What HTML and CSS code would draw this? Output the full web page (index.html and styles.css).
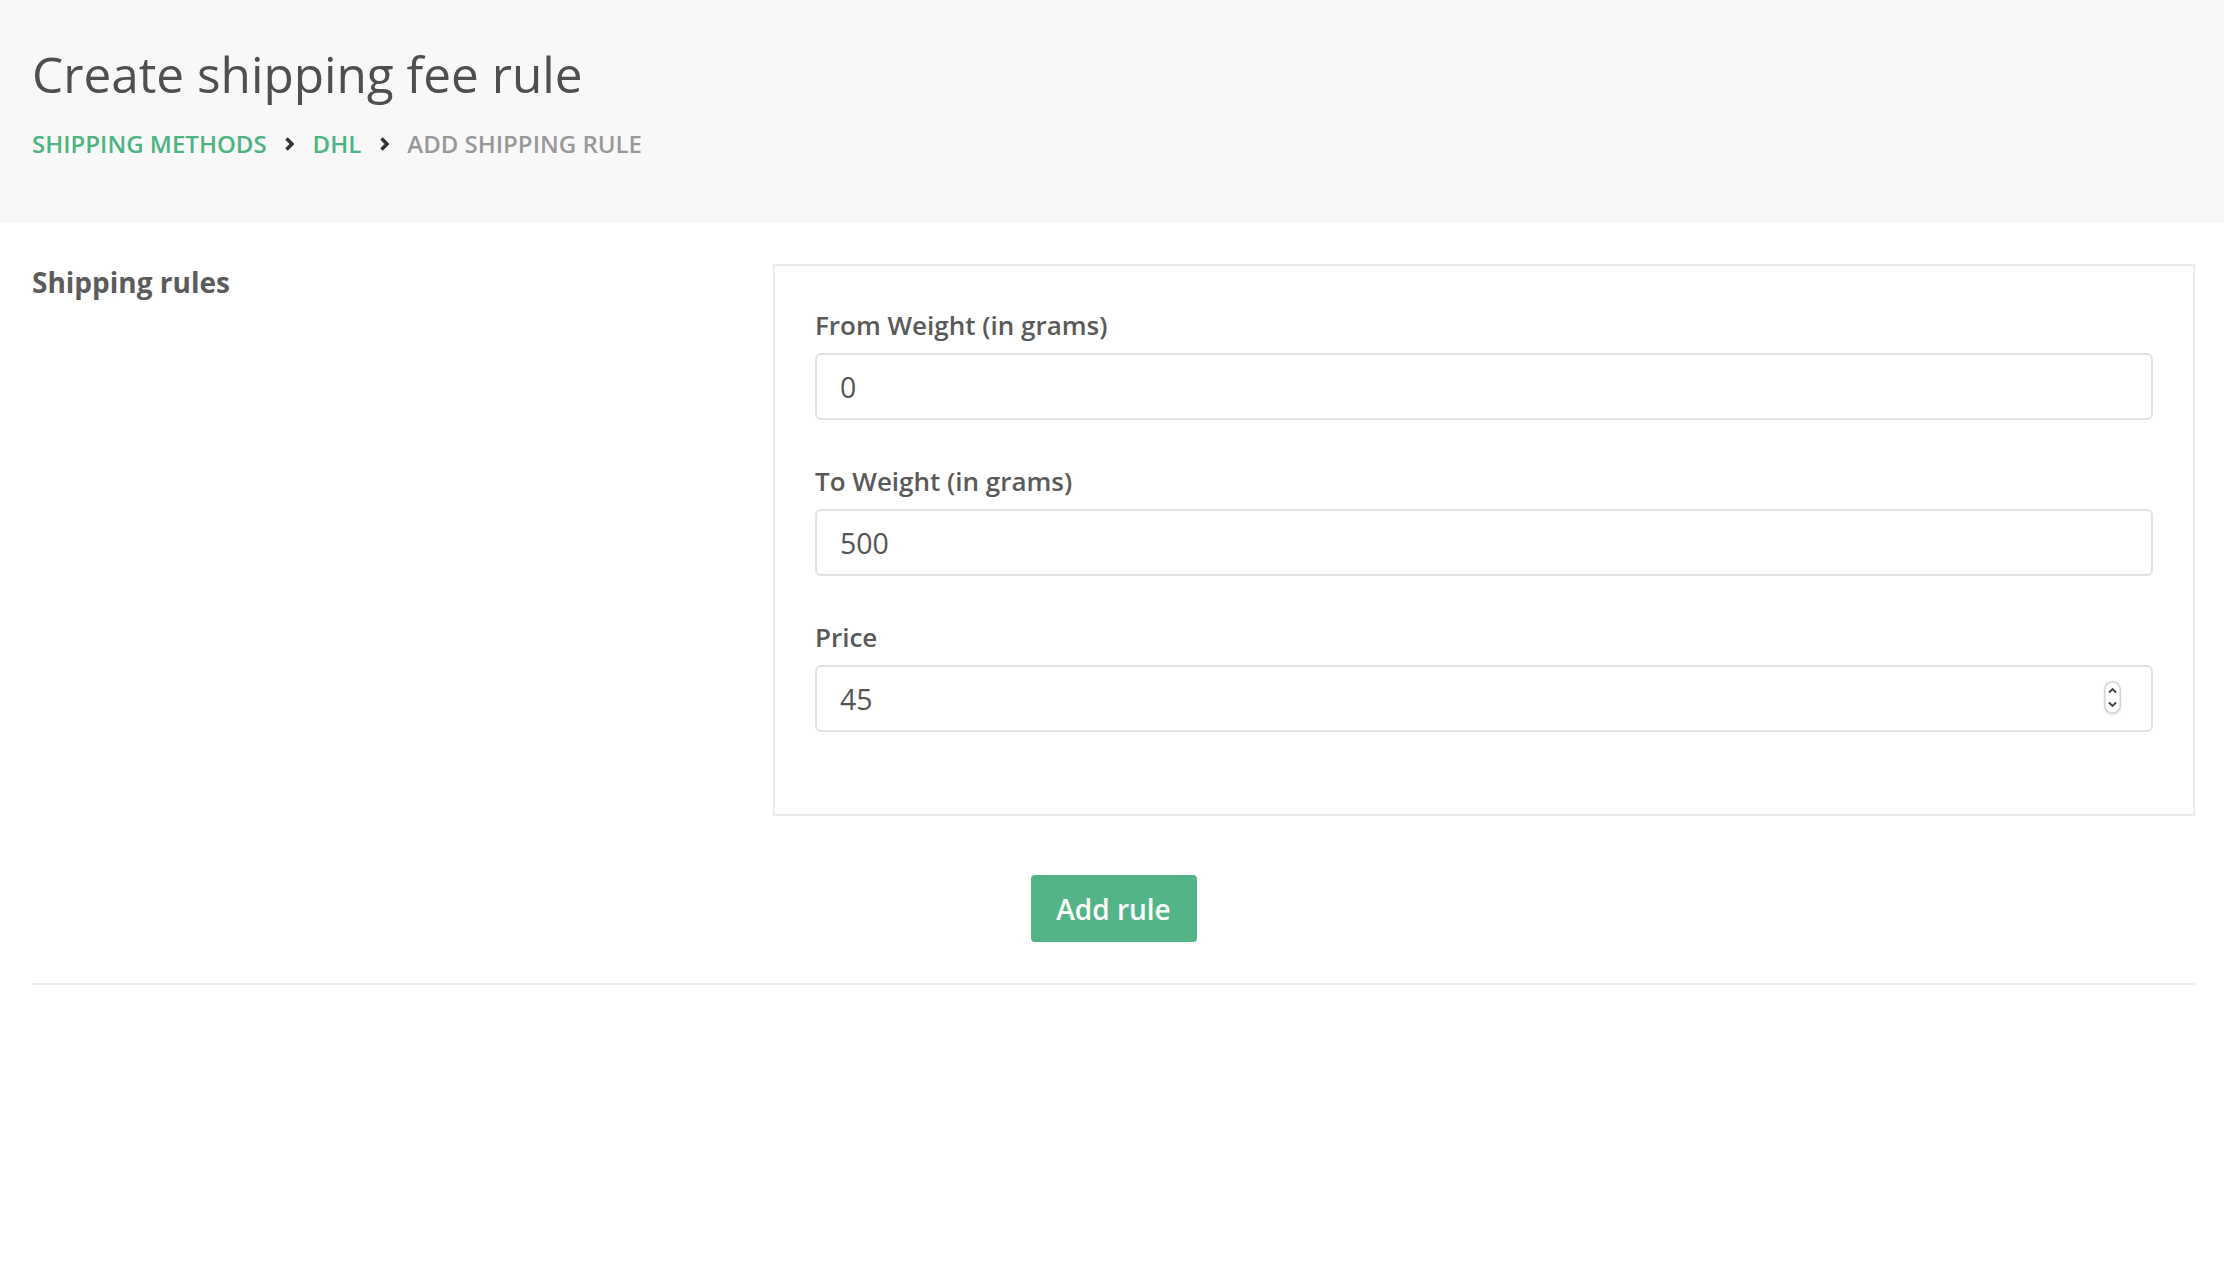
FILE: index.html
```html
<!DOCTYPE html>
<html lang="en">
<head>
  <meta charset="UTF-8">
  <meta name="viewport" content="width=device-width, initial-scale=1.0">
  <title>Create shipping fee rule</title>
  <link rel="stylesheet" href="styles.css">
</head>
<body>

  <!-- Page header with breadcrumb -->
  <header class="page-header">
    <h1 class="page-title">Create shipping fee rule</h1>
    <nav class="breadcrumb">
      <a href="#" class="crumb-link">Shipping methods</a>
      <svg class="crumb-sep" width="9" height="14" viewBox="0 0 9 14"><path d="M1.5 1.5 L7 7 L1.5 12.5" /></svg>
      <a href="#" class="crumb-link">DHL</a>
      <svg class="crumb-sep" width="9" height="14" viewBox="0 0 9 14"><path d="M1.5 1.5 L7 7 L1.5 12.5" /></svg>
      <span class="crumb-current">Add shipping rule</span>
    </nav>
  </header>

  <!-- Rule form -->
  <div class="content">
    <form id="rule-form" class="rule-form">
      <div class="form-section">
        <h3 class="section-title">Shipping rules</h3>
        <div class="form-card">
          <div class="form-group">
            <label for="from_weight">From Weight (in grams)</label>
            <input type="text" id="from_weight" name="from_weight" value="0">
          </div>
          <div class="form-group">
            <label for="to_weight">To Weight (in grams)</label>
            <input type="text" id="to_weight" name="to_weight" value="500">
          </div>
          <div class="form-group">
            <label for="price">Price</label>
            <div class="input-wrap">
              <input type="number" id="price" name="price" value="45">
              <svg class="spinner" width="17" height="33" viewBox="0 0 17 33">
                <rect x="0.75" y="0.75" width="15.5" height="31.5" rx="7.75" />
                <path d="M5 11.5 L8.5 8 L12 11.5" />
                <path d="M5 21.5 L8.5 25 L12 21.5" />
              </svg>
            </div>
          </div>
        </div>
      </div>

      <div class="form-actions">
        <button type="submit" class="submit-button">Add rule</button>
      </div>
      <hr class="divider">
    </form>
  </div>

</body>
</html>
```

FILE: styles.css
```css
/* General page styles */
body {
  margin: 0;
  font-family: "Open Sans", "Noto Sans", sans-serif;
  background-color: #fff;
  color: #555;
}

/* Header */
.page-header {
  background-color: #f8f8f8;
  height: 223px;
  box-sizing: border-box;
  padding: 44px 29px 0 32px;
}

.page-title {
  margin: 0;
  font-size: 49.5px;
  line-height: 60px;
  font-weight: 400;
  color: #4f4f4f;
}

.breadcrumb {
  display: flex;
  align-items: center;
  gap: 18.5px;
  margin-top: 25px;
  font-size: 24px;
  line-height: 30px;
  font-weight: 600;
  text-transform: uppercase;
}

.crumb-link {
  color: #4db482;
  text-decoration: none;
}

.crumb-current {
  color: #999;
}

.crumb-sep path {
  fill: none;
  stroke: #333;
  stroke-width: 3.5;
}

/* Content */
.content {
  padding: 41px 29px 0 32px;
}

.form-section {
  display: grid;
  grid-template-columns: 741px 1fr;
}

.section-title {
  margin: 0;
  font-size: 28px;
  line-height: 36px;
  font-weight: 700;
  color: #5c5c5c;
}

.form-card {
  border: 2px solid #ebebeb;
  padding: 41px 40px 39px;
}

.form-group {
  margin-bottom: 43px;
}

label {
  display: block;
  margin-bottom: 10px;
  font-size: 26px;
  line-height: 36px;
  font-weight: 600;
  color: #5a5a5a;
}

input[type="text"], input[type="number"] {
  display: block;
  width: 100%;
  height: 67px;
  box-sizing: border-box;
  padding: 0 23px;
  border: 2px solid #e3e3e3;
  border-radius: 6px;
  background-color: #fff;
  font-family: inherit;
  font-size: 28.5px;
  color: #555;
  outline: none;
  -moz-appearance: textfield;
}

input[type="number"]::-webkit-inner-spin-button,
input[type="number"]::-webkit-outer-spin-button {
  -webkit-appearance: none;
  margin: 0;
}

.input-wrap {
  position: relative;
}

/* Drawn number spinner */
.spinner {
  position: absolute;
  top: 16px;
  right: 32px;
  filter: drop-shadow(0 1px 1px rgba(0, 0, 0, 0.12));
}

.spinner rect {
  fill: #fff;
  stroke: #d4d4d4;
  stroke-width: 1.5;
}

.spinner path {
  fill: none;
  stroke: #444;
  stroke-width: 1.8;
}

/* Actions */
.form-actions {
  display: flex;
  justify-content: center;
  margin-top: 59px;
}

.submit-button {
  width: 166px;
  height: 67px;
  background-color: #53b587;
  color: #fff;
  border: none;
  border-radius: 4px;
  font-family: inherit;
  font-size: 28px;
  font-weight: 600;
  cursor: pointer;
}

.divider {
  margin: 41px 0 0;
  border: none;
  border-top: 2px solid #eee;
}
```
